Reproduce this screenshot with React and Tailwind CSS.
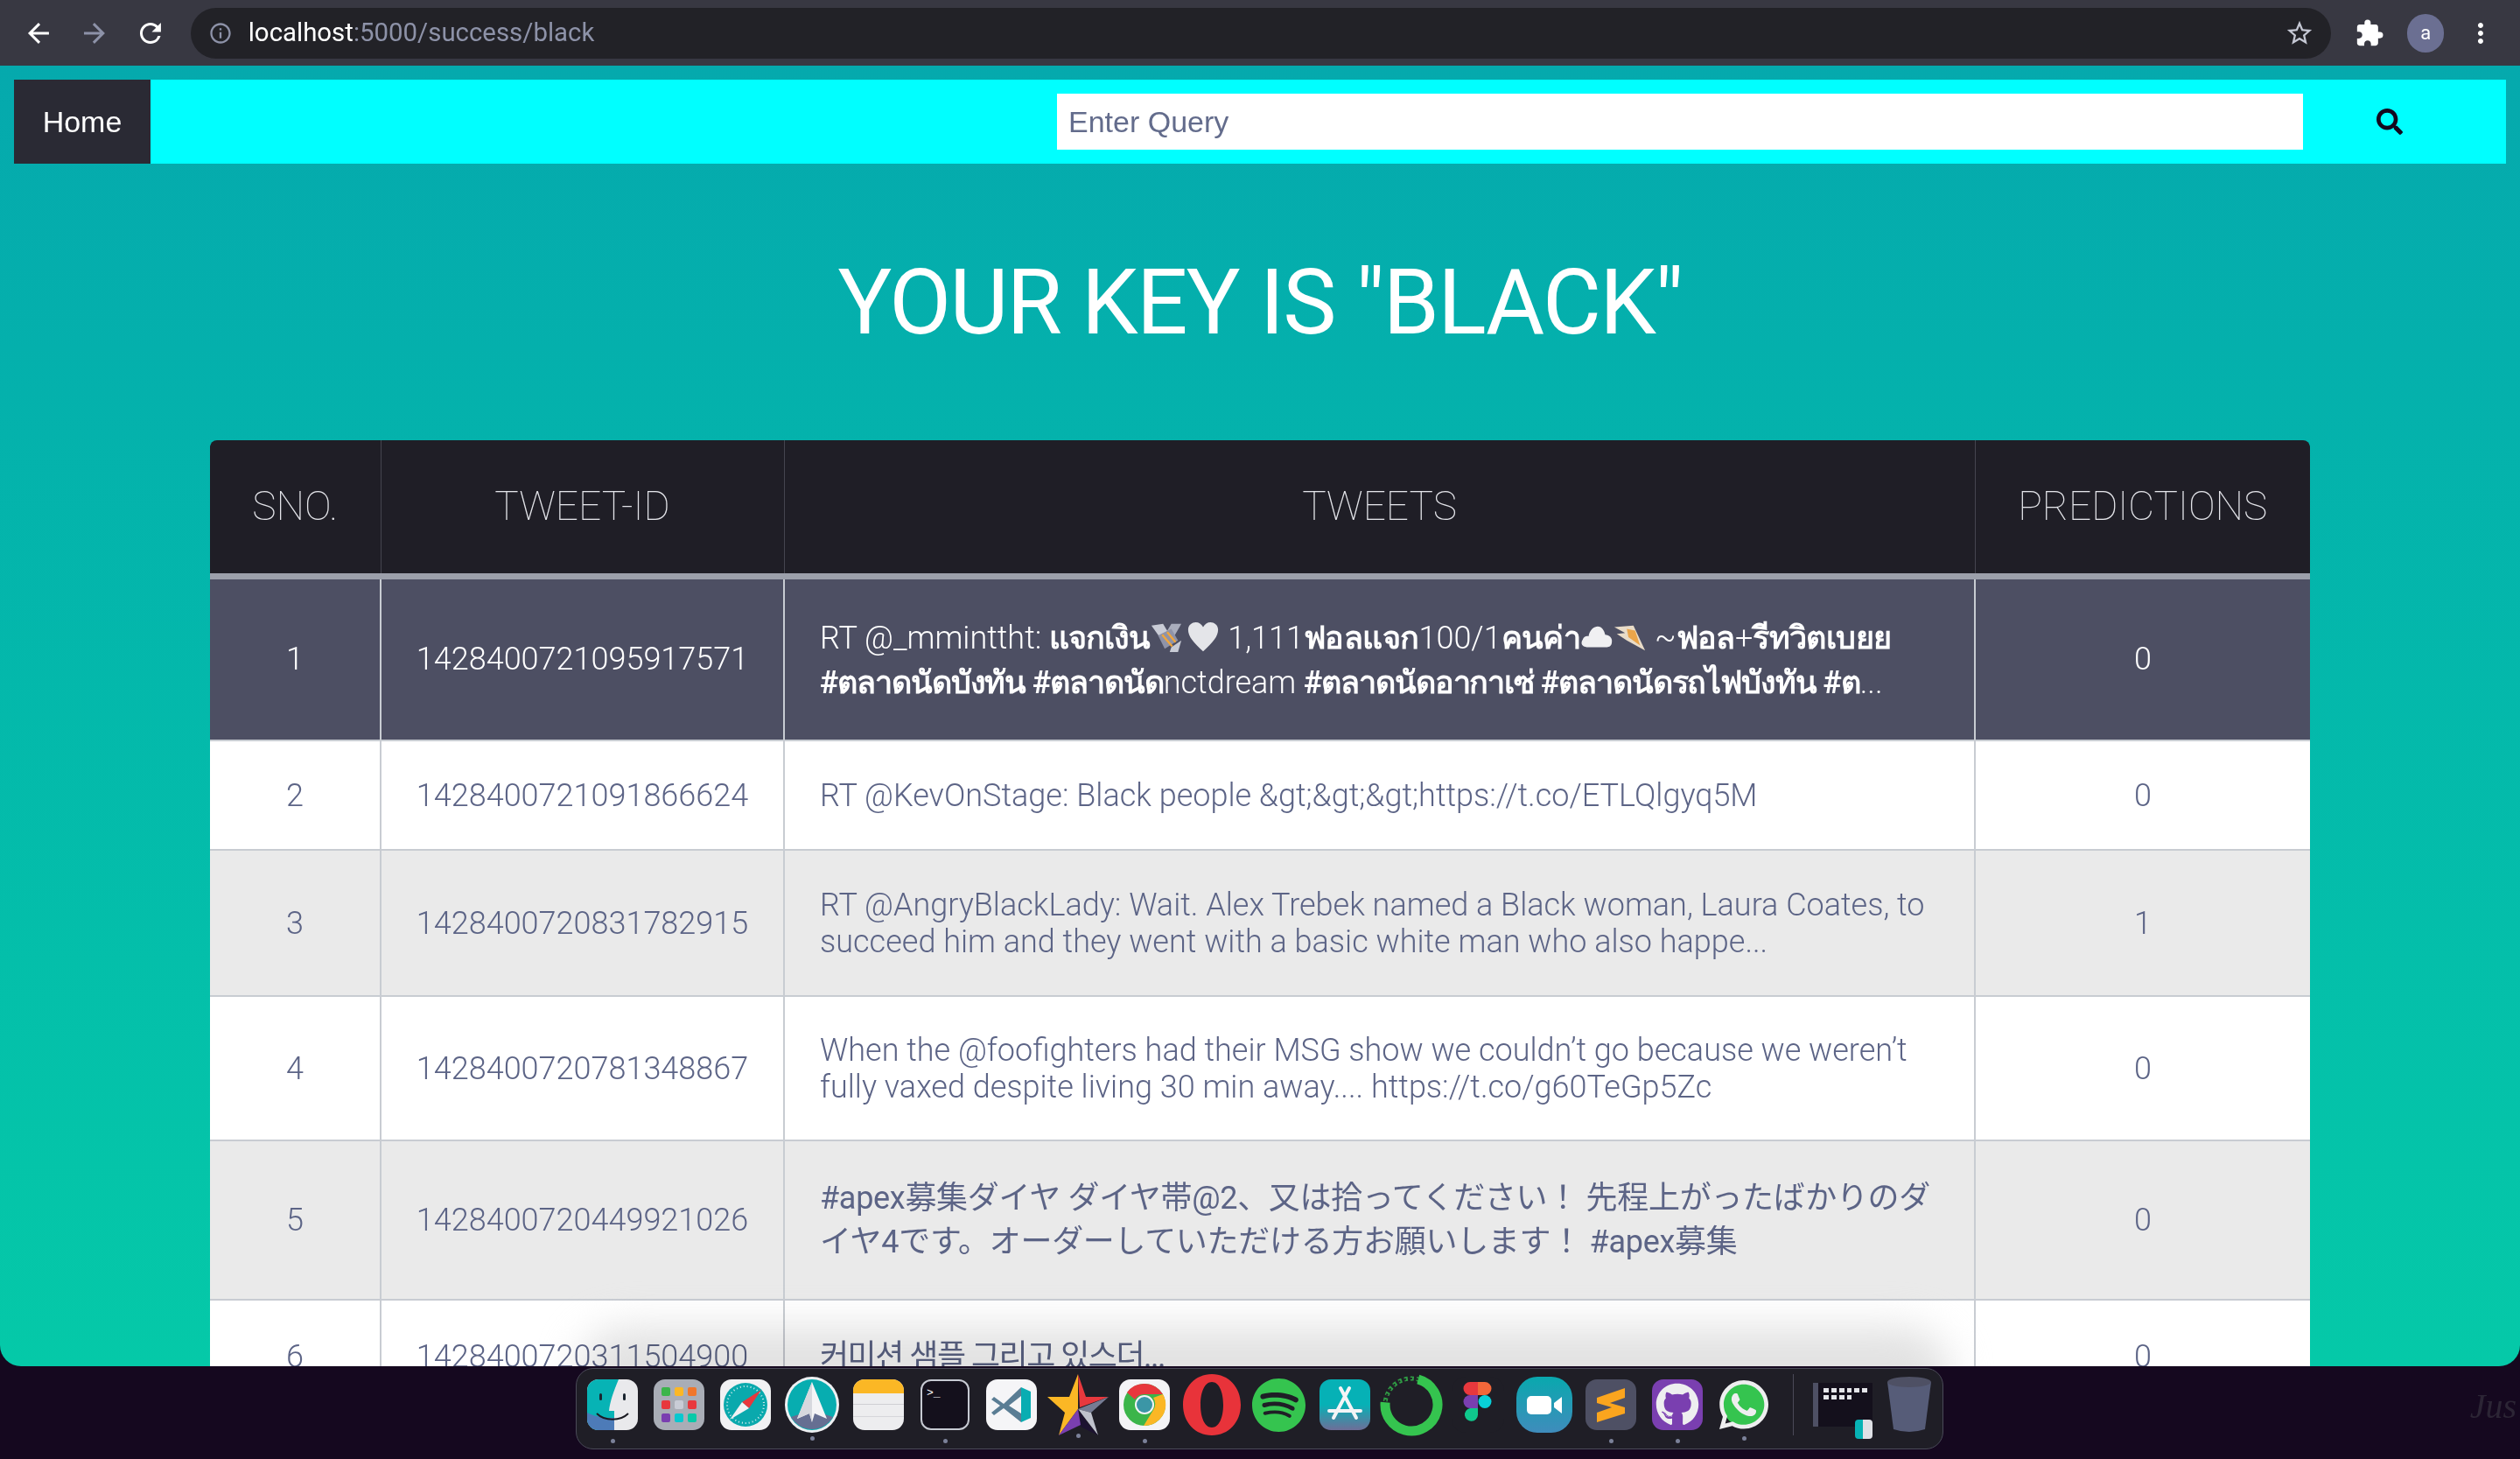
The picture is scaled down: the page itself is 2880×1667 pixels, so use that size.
import { MdArrowBack, MdArrowForward, MdRefresh, MdInfoOutline, MdStarBorder, MdExtension, MdMoreVert } from 'react-icons/md';
import { FaSearch, FaSpotify, FaGithub, FaWhatsapp } from 'react-icons/fa';

const rows = [
  { id: 1, tweetId: '1428400721095917571', pred: 0, h: 'h-[188px]', bg: 'bg-[#4d4f63]', color: 'text-white', cell: 'leading-[51px] pt-[3px]' },
  { id: 2, tweetId: '1428400721091866624', pred: 0, h: 'h-[125px]', bg: 'bg-white', color: 'text-[#5c6486]', cell: 'leading-[42px]', text: 'RT @KevOnStage: Black people &gt;&gt;&gt;https://t.co/ETLQlgyq5M' },
  { id: 3, tweetId: '1428400720831782915', pred: 1, h: 'h-[167px]', bg: 'bg-[#eaeaea]', color: 'text-[#5c6486]', cell: 'leading-[42px]', text: 'RT @AngryBlackLady: Wait. Alex Trebek named a Black woman, Laura Coates, to succeed him and they went with a basic white man who also happe...' },
  { id: 4, tweetId: '1428400720781348867', pred: 0, h: 'h-[165px]', bg: 'bg-white', color: 'text-[#5c6486]', cell: 'leading-[42px]', text: 'When the @foofighters had their MSG show we couldn’t go because we weren’t fully vaxed despite living 30 min away.... https://t.co/g60TeGp5Zc' },
  { id: 5, tweetId: '1428400720449921026', pred: 0, h: 'h-[182px]', bg: 'bg-[#eaeaea]', color: 'text-[#5c6486]', cell: "leading-[50px] tracking-[-0.3px] font-normal font-['Roboto','Noto_Sans_CJK_JP',sans-serif]", text: '#apex募集ダイヤ ダイヤ帯@2、又は拾ってください！ 先程上がったばかりのダイヤ4です。オーダーしていただける方お願いします！ #apex募集' },
  { id: 6, tweetId: '1428400720311504900', pred: 0, h: 'h-[130px]', bg: 'bg-white', color: 'text-[#5c6486]', cell: "leading-[42px] tracking-[-1.5px] font-normal font-['Roboto','Noto_Sans_CJK_KR',sans-serif]", text: '커미션 샘플 그리고 있스더...' },
];

function Emoji({ kind }) {
  if (kind === 'money') {
    return (
      <svg viewBox="0 0 40 40" className="inline-block w-[40px] h-[38px] align-[-6px]">
        <path d="M2 6 L16 4 L22 14 L12 20 Z" fill="#c9ccd6" />
        <path d="M38 4 L26 4 L20 14 L30 18 Z" fill="#a9adbc" />
        <path d="M10 18 L26 10 L34 24 L18 34 Z" fill="#8f93a8" />
        <path d="M26 32 L38 24 L34 38 L24 38 Z" fill="#c9ccd6" />
        <path d="M15 17 L27 31 M21 14 L31 26" stroke="#f0a63c" strokeWidth="2.5" />
      </svg>
    );
  }
  if (kind === 'heart') {
    return (
      <svg viewBox="0 0 40 40" className="inline-block w-[38px] h-[38px] align-[-6px] ml-[3px]">
        <path d="M20 37 C8 26 2 19 2 11 C2 5 7 2 11 2 C15 2 18 4 20 8 C22 4 25 2 29 2 C33 2 38 5 38 11 C38 19 32 26 20 37 Z" fill="#e4e5e9" />
      </svg>
    );
  }
  if (kind === 'cloud') {
    return (
      <svg viewBox="0 0 40 40" className="inline-block w-[38px] h-[38px] align-[-6px]">
        <path d="M8 32 C2 32 0 27 3 23 C4 19 8 18 10 19 C11 11 17 7 21 7 C26 7 29 12 30 17 C35 17 39 21 38 26 C38 30 35 32 32 32 Z" fill="#f0f0f2" />
      </svg>
    );
  }
  return (
    <svg viewBox="0 0 40 40" className="inline-block w-[38px] h-[38px] align-[-6px]">
      <path d="M1 8 L24 6 L38 36 L16 24 L4 16 L14 15 Z" fill="#e9dcc8" />
      <path d="M16 10 L26 12 L32 30 L18 20 Z" fill="#eaa54a" />
    </svg>
  );
}

function Thai({ children }) {
  return <span className="font-bold tracking-[-1.1px]">{children}</span>;
}

function ThaiLoose({ children }) {
  return <span className="font-bold tracking-[-0.6px]">{children}</span>;
}

function ThaiRow() {
  return (
    <>
      RT @_mminttht: <Thai>แจกเงิน</Thai><Emoji kind="money" /><Emoji kind="heart" /> 1,111<ThaiLoose>ฟอลแจก</ThaiLoose>100/1<ThaiLoose>คนค่า</ThaiLoose><Emoji kind="cloud" /><Emoji kind="quill" /> ~<ThaiLoose>ฟอล</ThaiLoose>+<ThaiLoose>รีทวิตเบยย</ThaiLoose> <Thai>#ตลาดนัดบังทัน #ตลาดนัด</Thai>nctdream <Thai>#ตลาดนัดอากาเซ่ #ตลาดนัดรถไฟบังทัน #ต</Thai>...
    </>
  );
}

function Finder() {
  return (
    <svg viewBox="0 0 58 58" className="w-[58px] h-[58px]">
      <rect width="58" height="58" rx="13" fill="#e9e9ec" />
      <path d="M13 0 H36 C30 14 26 26 25 36 H31 V58 H13 A13 13 0 0 1 0 45 V13 A13 13 0 0 1 13 0 Z" fill="#07b3b5" />
      <path d="M0 38 V45 A13 13 0 0 0 13 58 H31 V44 C18 44 8 42 0 38 Z" fill="#4d7bb8" />
      <rect x="14" y="16" width="3" height="8" rx="1.5" fill="#1a2530" />
      <rect x="41" y="16" width="3" height="8" rx="1.5" fill="#1a2530" />
      <path d="M11 39 C20 48 38 48 47 39" stroke="#1a1a22" strokeWidth="2" fill="none" />
    </svg>
  );
}

function Launchpad() {
  const colors = ['#3bb54a', '#fbb725', '#f0762b', '#e8383d', '#c9ccd6', '#e8383d', '#7a3fb0', '#08c8cf', '#08c9a8'];
  return (
    <div className="w-[58px] h-[58px] rounded-[13px] bg-[#a9adb6] grid grid-cols-3 gap-[5px] p-[9px]">
      {colors.map((c, i) => (
        <div key={i} className="rounded-[2px]" style={{ backgroundColor: c }} />
      ))}
    </div>
  );
}

function Safari() {
  return (
    <svg viewBox="0 0 58 58" className="w-[58px] h-[58px]">
      <rect width="58" height="58" rx="13" fill="#f1f1f3" />
      <circle cx="29" cy="29" r="25" fill="#0aa9ad" />
      <circle cx="29" cy="29" r="21" fill="none" stroke="#d8eef0" strokeWidth="2" strokeDasharray="1 3" />
      <path d="M47 12 L25 26 L33 33 Z" fill="#e8383d" />
      <path d="M11 46 L25 26 L33 33 Z" fill="#f2f2f4" />
    </svg>
  );
}

function Spark() {
  return (
    <svg viewBox="0 0 62 64" className="w-[62px] h-[64px]">
      <ellipse cx="31" cy="32" rx="31" ry="32" fill="#eef0f2" />
      <ellipse cx="31" cy="32" rx="28" ry="29" fill="#07adb0" />
      <path d="M7 46 A28 29 0 0 0 55 46 L31 38 Z" fill="#666f92" />
      <path d="M31 6 L48 48 L34 42 L31 52 L28 42 L14 48 Z" fill="#f4f4f6" />
      <path d="M31 6 L14 48 L28 42 L31 52 Z" fill="#d6d8de" />
    </svg>
  );
}

function Notes() {
  return (
    <div className="w-[58px] h-[58px] rounded-[13px] bg-[#ededef] overflow-hidden flex flex-col">
      <div className="h-[16px] bg-[#fbb725]" />
      <div className="h-[13px] border-b border-[#cfcfd3]" />
      <div className="h-[14px] border-b border-[#d6d6da]" />
      <div className="h-[14px]" />
    </div>
  );
}

function Terminal() {
  return (
    <div className="w-[56px] h-[58px] rounded-[12px] bg-[#14101c] border-2 border-[#c7cad3] pt-[7px] pl-[5px] font-['Liberation_Mono',monospace] text-[13px] leading-none text-white">
      &gt;_
    </div>
  );
}

function VsCode() {
  return (
    <svg viewBox="0 0 58 58" className="w-[58px] h-[58px]">
      <rect width="58" height="58" rx="13" fill="#f5f5f7" />
      <path d="M40 9 L51 14 V44 L40 49 Z" fill="#09adb2" />
      <path d="M40 9 L20 28 L9 20 L6 23 L16 30 L6 38 L9 41 L20 33 L40 49 V39 L26 30 L40 19 Z" fill="#5a7d94" />
    </svg>
  );
}

function StarApp() {
  return (
    <svg viewBox="0 0 70 70" className="w-[70px] h-[70px]">
      <path d="M35 0 L25 26 L0 26 L20 44 L13 70 L35 40 Z" fill="#fbb725" />
      <path d="M35 0 L44 26 L70 26 L37 38 Z" fill="#e8383d" />
      <path d="M70 26 L50 44 L35 40 Z" fill="#767c93" />
      <path d="M50 44 L58 70 L35 40 Z" fill="#bfc2cc" />
      <path d="M35 40 L46 56 L58 70 L38 60 Z" fill="#1c1230" />
      <path d="M35 40 L13 70 L38 58 Z" fill="#7a3fb0" />
    </svg>
  );
}

function ChromeApp() {
  return (
    <svg viewBox="0 0 58 58" className="w-[58px] h-[58px]">
      <rect width="58" height="58" rx="13" fill="#f4f4f6" />
      <circle cx="29" cy="29" r="24" fill="#3bb54a" />
      <path d="M29 5 A24 24 0 0 1 50 17 L29 17 A12 12 0 0 0 18 23 L9 15 A24 24 0 0 1 29 5 Z" fill="#e8383d" />
      <path d="M50 17 A24 24 0 0 1 28 53 L39 35 A12 12 0 0 0 39 21 Z" fill="#fbb725" />
      <circle cx="29" cy="29" r="11" fill="#f4f4f6" />
      <circle cx="29" cy="29" r="9" fill="#3b96a6" />
    </svg>
  );
}

function Opera() {
  return (
    <svg viewBox="0 0 66 70" className="w-[66px] h-[70px]">
      <path fillRule="evenodd" d="M33 0 C52 0 66 15 66 35 C66 55 52 70 33 70 C14 70 0 55 0 35 C0 15 14 0 33 0 Z M33 9 C25 9 20 20 20 35 C20 50 25 61 33 61 C41 61 46 50 46 35 C46 20 41 9 33 9 Z" fill="#e8333a" />
    </svg>
  );
}

function AppStore() {
  return (
    <svg viewBox="0 0 58 58" className="w-[58px] h-[58px]">
      <defs>
        <linearGradient id="as" x1="0" y1="0" x2="0" y2="1">
          <stop offset="0.5" stopColor="#06b1b6" />
          <stop offset="1" stopColor="#6e6e98" />
        </linearGradient>
      </defs>
      <rect width="58" height="58" rx="13" fill="url(#as)" />
      <path d="M34 10 L16 44 M24 10 L42 44 M11 36 H47" stroke="#f4f4f6" strokeWidth="4" strokeLinecap="round" />
    </svg>
  );
}

function Ring() {
  return (
    <svg viewBox="0 0 72 72" className="w-[72px] h-[72px]">
      <circle cx="36" cy="36" r="30" fill="none" stroke="#35c44f" strokeWidth="5" strokeDasharray="4 3" opacity="0.75" />
      <circle cx="36" cy="36" r="30" fill="none" stroke="#1f1e26" strokeWidth="2" strokeDasharray="2 5" />
      <circle cx="36" cy="36" r="30" fill="none" stroke="#35c44f" strokeWidth="11" strokeDasharray="136 200" transform="rotate(-75 36 36)" />
    </svg>
  );
}

function Figma() {
  return (
    <svg viewBox="0 0 60 64" className="w-[60px] h-[64px]">
      <rect width="60" height="64" rx="16" fill="#1f1e26" />
      <path d="M30 6 H21 A7.5 7.5 0 0 0 21 21 H30 Z" fill="#e8383d" />
      <path d="M30 6 H38 A7.5 7.5 0 0 1 38 21 H30 Z" fill="#f2673a" />
      <path d="M30 21 H21 A7.5 7.5 0 0 0 21 36 H30 Z" fill="#7a3fb0" />
      <circle cx="38" cy="28.5" r="7.5" fill="#08d0d8" />
      <path d="M21 36 H30 V43.5 A7.5 7.5 0 1 1 21 36 Z" fill="#0fc88c" />
    </svg>
  );
}

function ZoomApp() {
  return (
    <svg viewBox="0 0 64 64" className="w-[64px] h-[64px]">
      <defs>
        <linearGradient id="zm" x1="0" y1="0" x2="0" y2="1">
          <stop offset="0" stopColor="#09a8ae" />
          <stop offset="1" stopColor="#3f8cbc" />
        </linearGradient>
      </defs>
      <rect width="64" height="64" rx="24" fill="url(#zm)" />
      <rect x="12" y="22" width="28" height="21" rx="5" fill="#fff" />
      <path d="M43 30 L52 23 V42 L43 35 Z" fill="#fff" />
    </svg>
  );
}

function Sublime() {
  return (
    <svg viewBox="0 0 58 58" className="w-[58px] h-[58px]">
      <rect width="58" height="58" rx="13" fill="#4e5064" />
      <path d="M13 21 L45 10 V21 L28 27 L45 32 V39 L13 49 V38 L30 32 L13 27 Z" fill="#fba51e" />
    </svg>
  );
}

function WhatsApp() {
  return (
    <div className="relative w-[64px] h-[64px]">
      <div className="absolute left-[8px] top-[7px] w-[48px] h-[50px] rounded-full bg-[#35c44f]" />
      <FaWhatsapp className="relative w-[64px] h-[64px] text-[#eeeeef]" />
    </div>
  );
}

function Dot() {
  return <div className="w-[5px] h-[5px] rounded-full bg-[#7b8199]" />;
}

function DockItem({ width, dot, children }) {
  return (
    <div className="relative flex items-center justify-center" style={{ width }}>
      {children}
      {dot && (
        <div className="absolute top-[68px] left-0 right-0 flex justify-center">
          <Dot />
        </div>
      )}
    </div>
  );
}

function Dock() {
  return (
    <div className="mt-[2px] ml-[658px] w-[1563px] h-[93px] rounded-[20px] bg-[#1f1e26] border border-[#4a4a58] flex items-start pl-[12px] pt-[6px]">
      <div className="flex items-center h-[70px]">
        <DockItem width={58} dot><Finder /></DockItem>
        <div className="w-[18px]" />
        <DockItem width={58}><Launchpad /></DockItem>
        <div className="w-[18px]" />
        <DockItem width={58}><Safari /></DockItem>
        <div className="w-[16px]" />
        <DockItem width={62} dot><Spark /></DockItem>
        <div className="w-[16px]" />
        <DockItem width={58}><Notes /></DockItem>
        <div className="w-[19px]" />
        <DockItem width={56} dot><Terminal /></DockItem>
        <div className="w-[19px]" />
        <DockItem width={58}><VsCode /></DockItem>
        <div className="w-[12px]" />
        <DockItem width={70} dot><StarApp /></DockItem>
        <div className="w-[12px]" />
        <DockItem width={58} dot><ChromeApp /></DockItem>
        <div className="w-[15px]" />
        <DockItem width={66}><Opera /></DockItem>
        <div className="w-[12px]" />
        <DockItem width={63}><FaSpotify className="w-[63px] h-[63px] text-[#35c44f]" /></DockItem>
        <div className="w-[15px]" />
        <DockItem width={58}><AppStore /></DockItem>
        <div className="w-[11px]" />
        <DockItem width={72}><Ring /></DockItem>
        <div className="w-[10px]" />
        <DockItem width={60}><Figma /></DockItem>
        <div className="w-[14px]" />
        <DockItem width={64}><ZoomApp /></DockItem>
        <div className="w-[15px]" />
        <DockItem width={58} dot><Sublime /></DockItem>
        <div className="w-[18px]" />
        <DockItem width={58} dot>
          <div className="w-[58px] h-[58px] rounded-[13px] bg-[#7a3fb0] flex items-center justify-center">
            <FaGithub className="w-[50px] h-[50px] text-[#eeeef0]" />
          </div>
        </DockItem>
        <div className="w-[15px]" />
        <DockItem width={64} dot><WhatsApp /></DockItem>
        <div className="w-[24px]" />
        <div className="w-px h-[70px] bg-[#4a4a58]" />
        <div className="w-[22px]" />
        <div className="relative w-[68px] h-[50px] bg-[#14101c] border-l-[6px] border-[#4e5064]">
          <div className="grid grid-cols-6 gap-[3px] p-[6px]">
            {[0, 1, 2, 3, 4, 5, 6, 7, 8, 9].map((n) => (
              <div key={n} className="h-[5px] bg-[#e4e5e9]" />
            ))}
          </div>
          <div className="absolute right-0 bottom-[-14px] w-[20px] h-[22px] rounded-[4px] bg-[#dfe1e6] border-l-[9px] border-[#07b3b5]" />
        </div>
        <div className="w-[16px]" />
        <svg viewBox="0 0 52 64" className="w-[52px] h-[64px]">
          <path d="M1 6 L8 60 Q26 66 44 60 L51 6 Z" fill="#565c78" />
          <ellipse cx="26" cy="6" rx="25" ry="6" fill="#4e5064" />
        </svg>
      </div>
    </div>
  );
}

export default function App() {
  return (
    <div className="h-[1667px] bg-[#15081f] overflow-hidden font-['Roboto',sans-serif] relative">
      {/* browser chrome */}
      <div className="h-[75px] bg-[#383842] flex items-center pl-[26px] pr-[27px]">
        <MdArrowBack className="w-[36px] h-[36px] text-white" />
        <MdArrowForward className="w-[36px] h-[36px] text-[#8d92a8] ml-[28px]" />
        <MdRefresh className="w-[36px] h-[36px] text-white ml-[28px]" />
        <div className="ml-[28px] w-[2453px] h-[58px] rounded-full bg-[#222227] flex items-center pl-[20px] pr-[19px]">
          <MdInfoOutline className="w-[28px] h-[28px] text-[#8d92a8]" />
          <span className="ml-[18px] text-[29.4px] text-white">localhost<span className="text-[#8d92a8]">:5000/success/black</span></span>
          <MdStarBorder className="ml-auto w-[34px] h-[34px] text-[#c5c8d4]" />
        </div>
        <MdExtension className="ml-[27px] w-[34px] h-[34px] text-white" />
        <div className="ml-[26px] w-[42px] h-[44px] rounded-full bg-[#6b6f92] text-white text-[22px] flex items-center justify-center">a</div>
        <MdMoreVert className="ml-[24px] w-[36px] h-[36px] text-white" />
      </div>

      {/* page */}
      <div className="relative h-[1486px] rounded-b-[24px] bg-gradient-to-b from-[#05a9ad] to-[#05c9a8] overflow-hidden">
        <div className="mx-[16px] mt-[16px] h-[96px] bg-[#00ffff] flex items-center">
          <div className="w-[156px] h-[96px] bg-[#2a2a34] text-white text-[34px] font-['Liberation_Sans',sans-serif] flex items-center justify-center">Home</div>
          <div className="ml-[1036px] w-[1424px] h-[64px] bg-white flex items-center pl-[13px] text-[34px] font-['Liberation_Sans',sans-serif] text-[#636c8c]">Enter Query</div>
          <FaSearch className="ml-[84px] w-[30px] h-[30px] text-[#14091f]" />
        </div>

        <h1 className="mt-[99px] text-center text-[103px] leading-[120px] font-normal tracking-[-1.7px] text-white">YOUR KEY IS "BLACK"</h1>

        <table className="mt-[97px] ml-[240px] w-[2400px] table-fixed border-collapse text-[36px] text-center">
          <thead>
            <tr className="h-[155px] bg-[#1f1e26] text-[#e4e5ea] text-[46px] font-thin border-b-[7px] border-[#9ca0ab]">
              <th className="w-[195px] font-thin border-r border-[#45454f] rounded-tl-[8px]">SNO.</th>
              <th className="w-[461px] font-thin border-r border-[#45454f]">TWEET-ID</th>
              <th className="w-[1361px] font-thin border-r border-[#45454f]">TWEETS</th>
              <th className="font-thin rounded-tr-[8px]">PREDICTIONS</th>
            </tr>
          </thead>
          <tbody className="font-light">
            {rows.map((r) => (
              <tr key={r.id} className={`${r.h} ${r.bg} ${r.color} border-b-2 border-[#c8ccd2]`}>
                <td className="border-r-2 border-[#c8ccd2]">{r.id}</td>
                <td className="border-r-2 border-[#c8ccd2]">{r.tweetId}</td>
                <td className={`border-r-2 border-[#c8ccd2] px-[40px] text-left ${r.cell}`}>
                  {r.text ?? <ThaiRow />}
                </td>
                <td>{r.pred}</td>
              </tr>
            ))}
          </tbody>
        </table>

        {/* dock shadow falling on the page */}
        <div className="absolute left-[660px] right-[650px] bottom-[-70px] h-[115px] rounded-[60px] bg-[#e2e2e2] blur-[22px] mix-blend-multiply pointer-events-none" />
      </div>

      <Dock />
      <div className="absolute right-[4px] bottom-[30px] text-[40px] italic font-['Liberation_Serif',serif] text-[#2c2535]">Jus</div>
    </div>
  );
}
